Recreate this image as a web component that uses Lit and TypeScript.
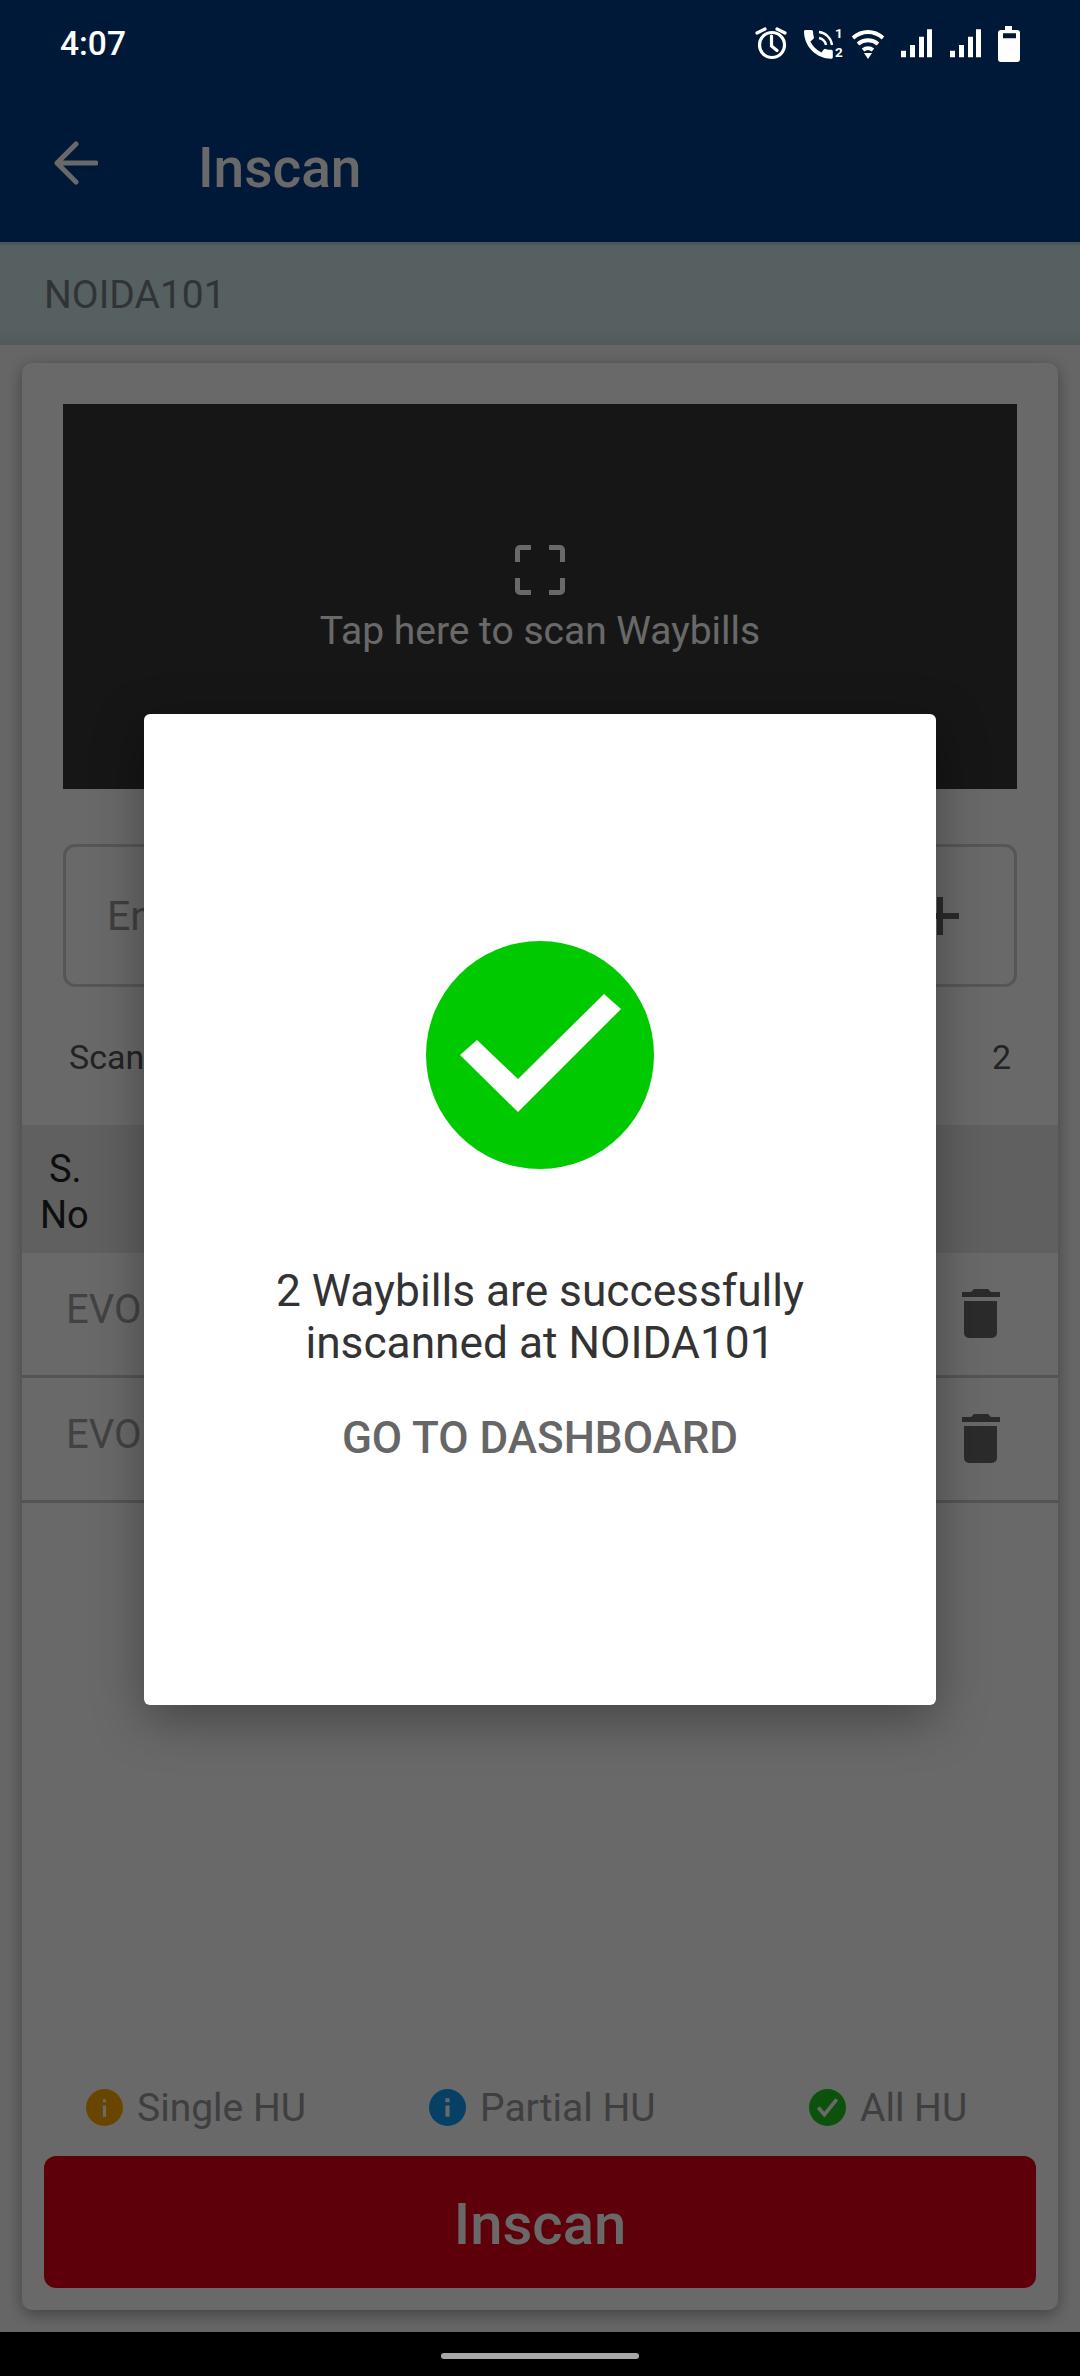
import { LitElement, html, css } from "lit";
import { customElement } from "lit/decorators.js";

const trash = html`<svg class="trash" viewBox="0 0 38 49"><path d="M12 0h14l3 3h9v5H0V3h9zM2 12h33v32a5 5 0 0 1-5 5H7a5 5 0 0 1-5-5z"/></svg>`;

@customElement("app-root")
export class AppRoot extends LitElement {
  static styles = css`
    :host { display: block; width: 1080px; height: 2376px; position: relative; overflow: hidden; font-family: Roboto, "Noto Sans", sans-serif; background: #000; }
    .status { height: 84px; background: #001938; color: #fff; display: flex; align-items: center; justify-content: space-between; padding: 2px 52px 0 60px; box-sizing: border-box; font-size: 33.500px; font-weight: 500; position: relative; z-index: 3; }
    .status-icons { display: block; width: 280px; height: 44px; margin-top: -2px; }
    .digit { font: 700 13.500px Roboto, sans-serif; fill: #fff; }
    .page { height: 2248px; display: flex; flex-direction: column; background: #f8f8f8; overflow: hidden; }
    .appbar { height: 158px; flex: none; background: #003e8a; display: flex; align-items: center; padding-left: 54px; gap: 100px; color: #fff; font-size: 55px; font-weight: 500; }
    .back { width: 44px; height: 44px; }
    .title { margin-top: 9px; }
    .loc { height: 103px; flex: none; background: linear-gradient(#d0e8ea 85%, #c8dcd8); color: #787f85; display: flex; align-items: center; padding-left: 44px; font-size: 39px; box-sizing: border-box; border-top: 3px solid #b5d0d8; }
    .card { margin: 18px 22px 22px; flex: 1; background: #fff; border-radius: 10px; box-shadow: 0 4px 16px rgba(0,0,0,.36); display: flex; flex-direction: column; min-height: 0; }
    .scan { margin: 41px 41px 0; height: 385px; flex: none; background: #363636; color: #fff; display: flex; flex-direction: column; align-items: center; padding-top: 141px; box-sizing: border-box; font-size: 39px; gap: 13px; }
    .frame { width: 50px; height: 50px; }
    .input { margin: 55px 41px 0; height: 143px; flex: none; border: 3px solid #d0d0d0; border-radius: 12px; box-sizing: border-box; display: flex; align-items: center; justify-content: space-between; padding: 0 55px 0 41px; font-size: 41px; color: #999; }
    .plus { width: 38px; height: 38px; fill: #686868; }
    .count { margin: 0 47px; height: 138px; flex: none; display: flex; align-items: center; justify-content: space-between; font-size: 34px; color: #555; padding-top: 2px; box-sizing: border-box; }
    .thead { height: 128px; flex: none; background: #e8e8e8; font-size: 38px; color: #222; line-height: 46px; padding: 21px 0 0 18px; box-sizing: border-box; }
    .thead span { display: block; text-indent: 9px; }
    .row { height: 125px; flex: none; border-bottom: 3px solid #ccc; display: flex; align-items: flex-start; justify-content: space-between; padding: 33px 58px 0 44px; font-size: 40px; color: #a0a0a0; box-sizing: border-box; }
    .trash { width: 38px; height: 49px; fill: #686868; margin-top: 3px; }
    .spacer { flex: 1; }
    .legend { display: flex; height: 60px; flex: none; align-items: center; font-size: 39px; color: #999; position: relative; }
    .leg { position: absolute; display: flex; align-items: center; gap: 14px; }
    .leg span { margin-top: 2px; }
    .leg svg { width: 37px; height: 37px; }
    .leg.a { left: 64px; } .leg.b { left: 407px; } .leg.c { left: 787px; }
    .inscan { margin: 19px 22px 22px; height: 132px; background: #e4001a; border-radius: 12px; color: #fff; display: flex; align-items: center; justify-content: center; padding-top: 4px; box-sizing: border-box; font-size: 58px; font-weight: 500; flex: none; }
    .scrim { position: absolute; left: 0; right: 0; top: 84px; height: 2248px; padding-top: 3px; box-sizing: border-box; background: rgba(0,0,0,.59); display: flex; align-items: center; justify-content: center; z-index: 2; }
    .modal { width: 792px; height: 991px; background: #fff; border-radius: 6px; box-shadow: 0 14px 50px rgba(0,0,0,.35); display: flex; flex-direction: column; align-items: center; padding-top: 227px; box-sizing: border-box; }
    .ok { width: 228px; height: 228px; display: block; }
    .msg { margin-top: 96px; font-size: 44.250px; line-height: 52px; color: #333; text-align: center; }
    .go { margin-top: 43px; font-size: 44px; font-weight: 500; color: #666; line-height: 52px; }
    .nav { position: absolute; left: 0; right: 0; bottom: 0; height: 44px; background: #000; z-index: 3; display: flex; justify-content: center; padding-top: 21px; box-sizing: border-box; }
    .pill { width: 198px; height: 6px; border-radius: 3px; background: #a8a8a8; }
  `;

  render() {
    return html`
      <div class="status">
        <span>4:07</span>
        <svg class="status-icons" viewBox="0 0 280 44" fill="#fff">
          <g fill="none" stroke="#fff" stroke-width="3.200" stroke-linecap="round"><circle cx="24" cy="25" r="12.500"/><path d="M23.500 16v10l5.500 4.500M9 13l8-4M37 13l-8-4"/></g>
          <path transform="translate(51.200 5.200) scale(1.600)" d="M20.010 15.380c-1.230 0-2.420-.2-3.530-.56a.977.977 0 0 0-1.010.24l-1.570 1.970c-2.830-1.350-5.480-3.900-6.890-6.830l1.950-1.660c.27-.28.35-.67.24-1.020-.37-1.110-.56-2.300-.56-3.530 0-.54-.45-.99-.99-.99H4.190C3.650 3 3 3.240 3 3.990 3 13.280 10.730 21 20.010 21c.71 0 .99-.63.99-1.180v-3.450c0-.54-.45-.99-.99-.99z"/>
          <g fill="none" stroke="#fff" stroke-width="2.400"><path d="M71 18a9 9 0 0 1 7 7M71 12a15 15 0 0 1 13 13"/></g>
          <text class="digit" x="87" y="18">1</text>
          <text class="digit" x="87" y="37">2</text>
          <g fill="none" stroke="#fff" stroke-width="3.800"><path d="M105 18c9-8 21-8 30 0M110 24c6-5 14-5 20 0M115 30c3-2.500 7-2.500 10 0"/></g>
          <path d="M116 33h8l-4 6z"/>
          <path d="M153 30.700h5v6.600h-5zM162 25h5v12.300h-5zM171 16.700h5v20.600h-5zM179 9.300h5v28h-5z"/>
          <path d="M202 30.700h5v6.600h-5zM211 25h5v12.300h-5zM220 16.700h5v20.600h-5zM228 9.300h5v28h-5z"/>
          <path fill-rule="evenodd" d="M257 6h7v4h5a3 3 0 0 1 3 3v26a3 3 0 0 1-3 3h-16a3 3 0 0 1-3-3V13a3 3 0 0 1 3-3h4zM255 13.300v5h13v-5z"/>
        </svg>
      </div>
      <div class="page">
        <div class="appbar">
          <svg class="back" viewBox="0 0 44 44" fill="none" stroke="#fff" stroke-width="5" stroke-linecap="round" stroke-linejoin="round"><path d="M42 22H3M22 3L3 22l19 19"/></svg>
          <span class="title">Inscan</span>
        </div>
        <div class="loc">NOIDA101</div>
        <div class="card">
          <div class="scan">
            <svg class="frame" viewBox="0 0 50 50" fill="none" stroke="#fff" stroke-width="5"><path d="M2.500 17V5a2.500 2.500 0 0 1 2.500-2.500h11M34 2.500h11A2.500 2.500 0 0 1 47.500 5v12M47.500 33v12a2.500 2.500 0 0 1-2.500 2.500H34M16 47.500H5A2.500 2.500 0 0 1 2.500 45V33"/></svg>
            <span>Tap here to scan Waybills</span>
          </div>
          <div class="input"><span>Enter</span><svg class="plus" viewBox="0 0 38 38"><path d="M16 0h6v16h16v6H22v16h-6V22H0v-6h16z"/></svg></div>
          <div class="count"><span>Scanned</span><span>2</span></div>
          <div class="thead"><span>S.</span>No</div>
          <div class="row"><span>EVO</span>${trash}</div>
          <div class="row"><span>EVO</span>${trash}</div>
          <div class="spacer"></div>
          <div class="legend">
            <div class="leg a"><svg viewBox="0 0 36 36"><circle cx="18" cy="18" r="18" fill="#ffab00"/><path d="M16.500 16h3v11h-3zM16.500 10h3v3h-3z" fill="#fff"/></svg><span>Single HU</span></div>
            <div class="leg b"><svg viewBox="0 0 36 36"><circle cx="18" cy="18" r="18" fill="#0f9cf5"/><path d="M16 16h4v11h-4zM16 9h4v4h-4z" fill="#fff"/></svg><span>Partial HU</span></div>
            <div class="leg c"><svg viewBox="0 0 36 36"><circle cx="18" cy="18" r="18" fill="#1fc61f"/><path d="M9 18l6 7L27 10" fill="none" stroke="#fff" stroke-width="3.500"/></svg><span>All HU</span></div>
          </div>
          <div class="inscan">Inscan</div>
        </div>
      </div>
      <div class="scrim">
        <div class="modal">
          <svg class="ok" viewBox="0 0 228 228">
            <circle cx="114" cy="114" r="114" fill="#00c900"/>
            <path d="M34 114L51 99L92 138L178 53L195 68L92 171z" fill="#fff"/>
          </svg>
          <div class="msg">2 Waybills are successfully<br />inscanned at NOIDA101</div>
          <div class="go">GO TO DASHBOARD</div>
        </div>
      </div>
      <div class="nav"><div class="pill"></div></div>
    `;
  }
}
